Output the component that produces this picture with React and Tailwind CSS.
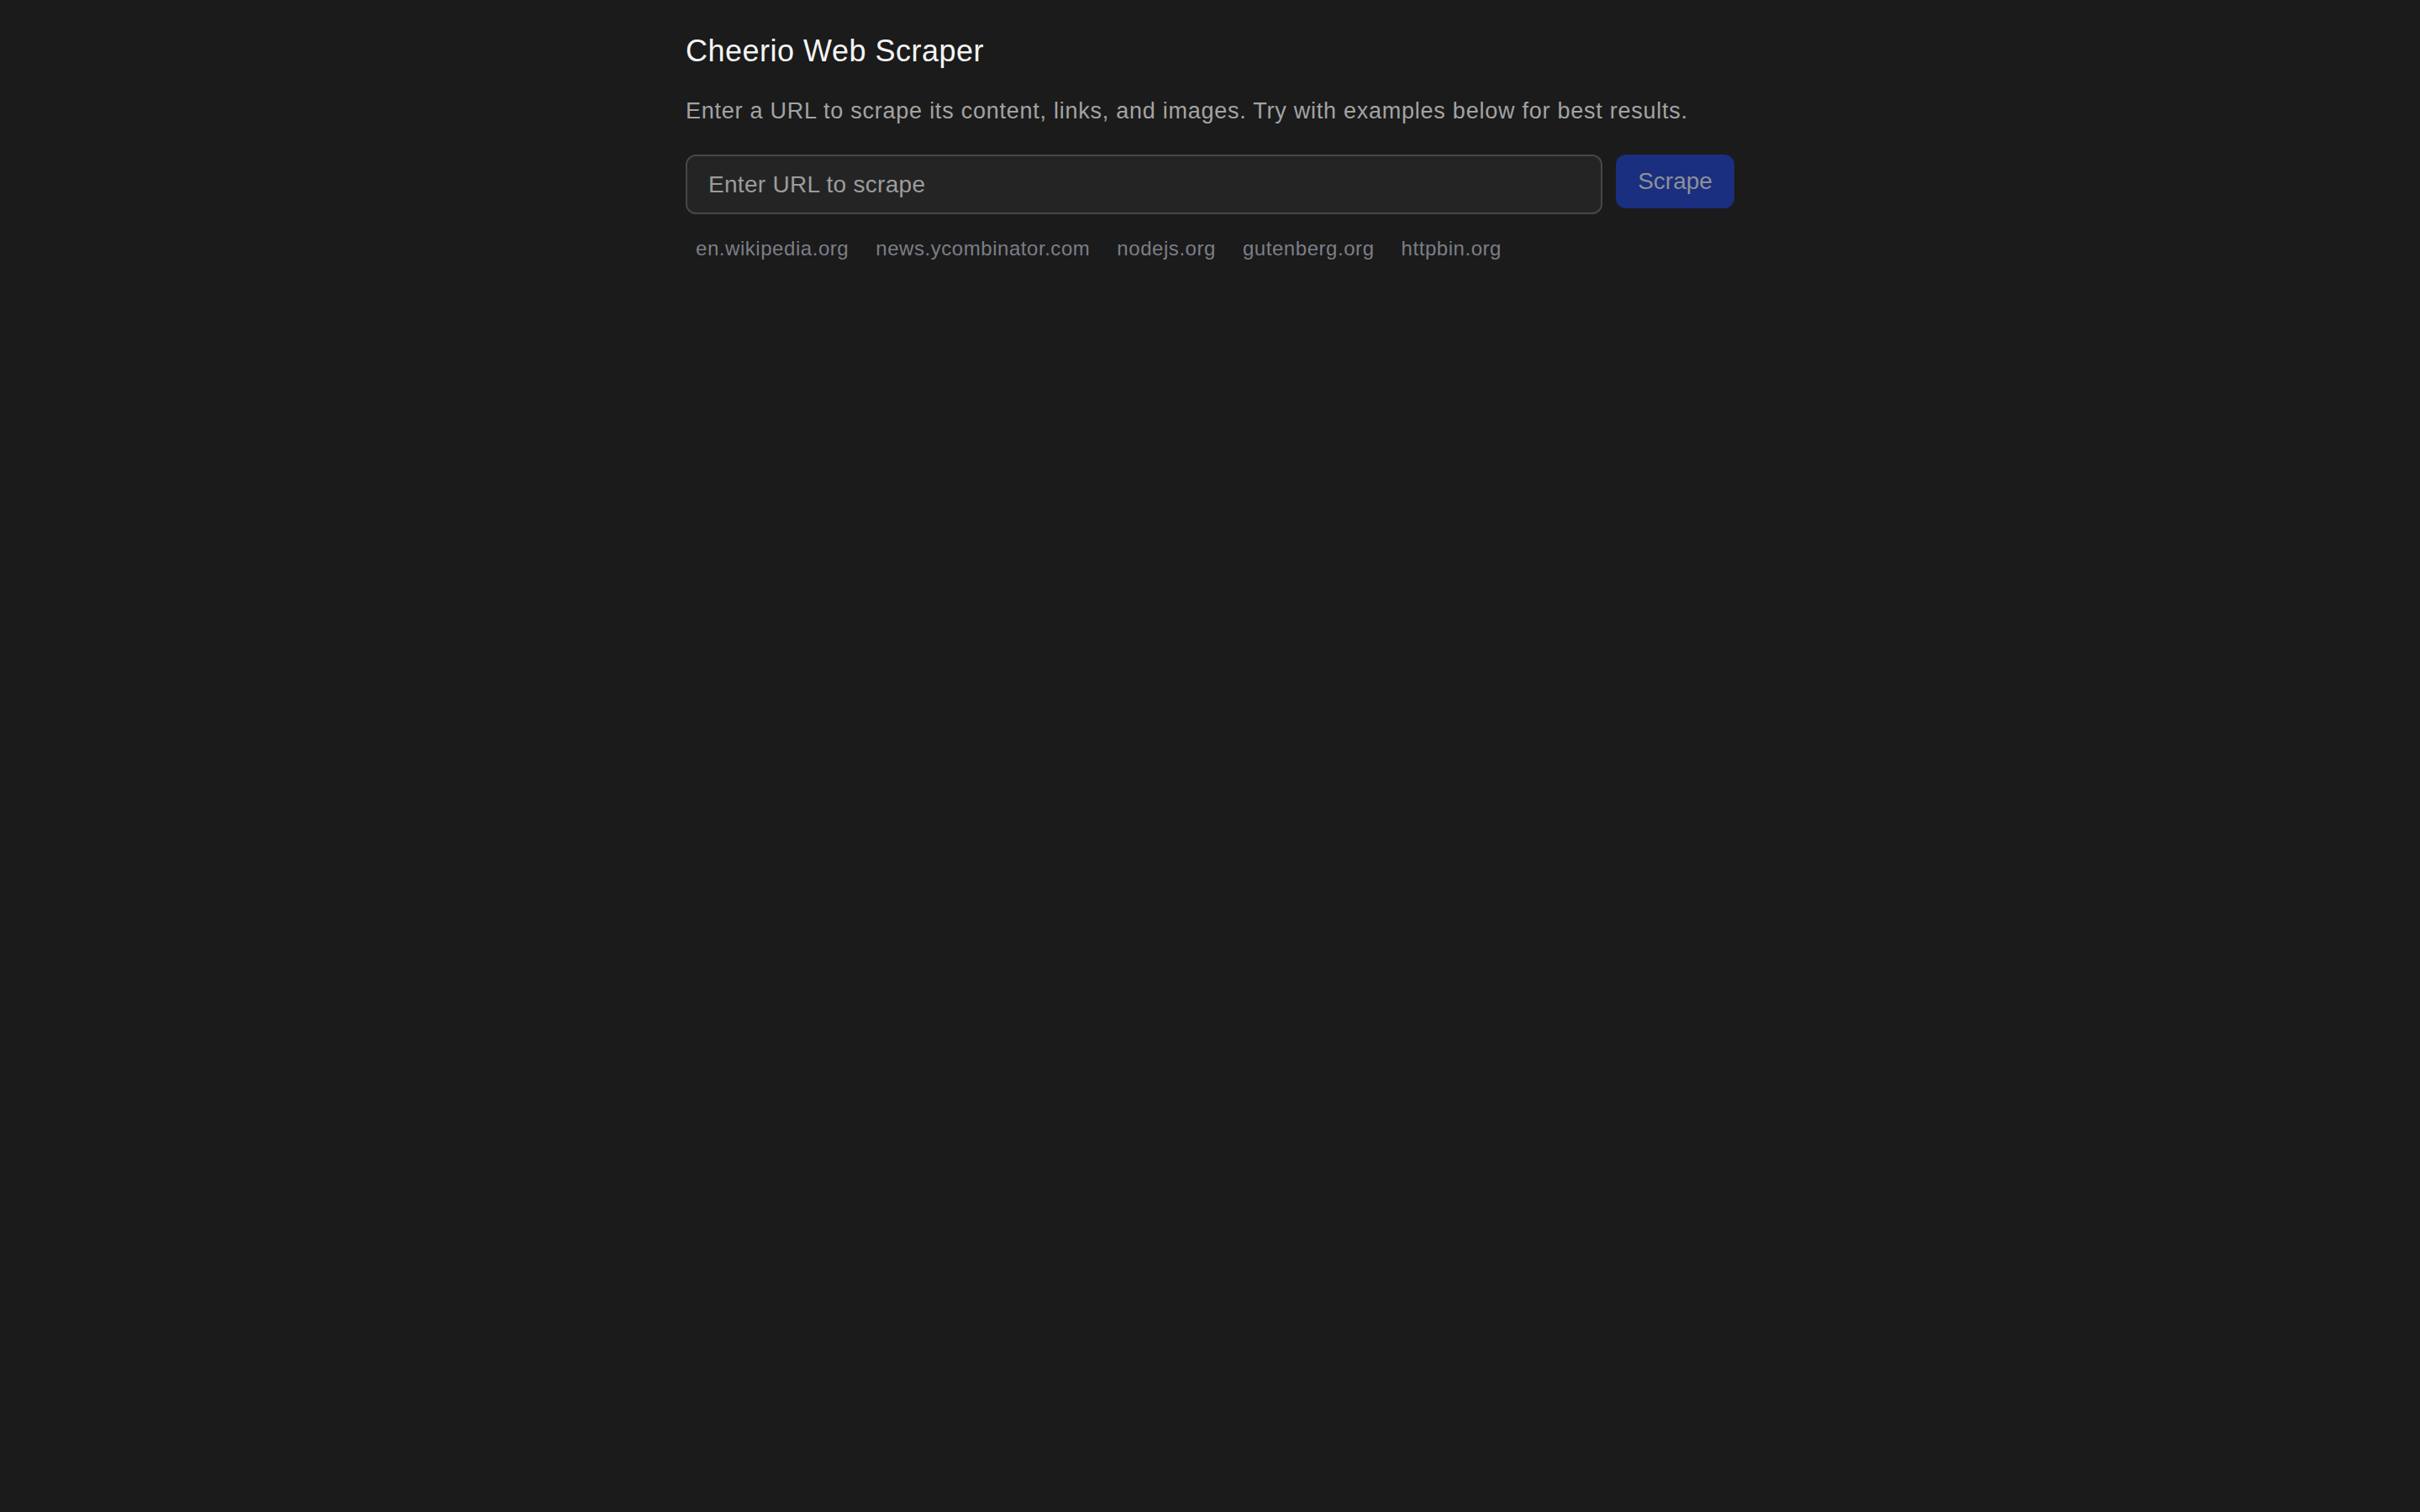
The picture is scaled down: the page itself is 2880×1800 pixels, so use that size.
import { useState } from 'react';

const examples = ['en.wikipedia.org', 'news.ycombinator.com', 'nodejs.org', 'gutenberg.org', 'httpbin.org'];

const App = () => {
    const [url, setUrl] = useState('');

    return (
        <div className="min-h-screen bg-[#1b1b1b] font-['Liberation_Sans',Arial,sans-serif]">
            <div className="max-w-[1280px] mx-auto px-4 pt-[38px]">
                <h1 className="text-[36px] leading-[46px] tracking-[0.5px] text-[#f4f4f4]">Cheerio Web Scraper</h1>
                <p className="mt-[28px] text-[27px] leading-[40px] tracking-[0.75px] text-[#a3a3a3]">
                    Enter a URL to scrape its content, links, and images. Try with examples below for best results.
                </p>

                <div className="mt-[32px] flex items-start gap-4">
                    <input
                        type="text"
                        value={url}
                        onChange={(e) => setUrl(e.target.value)}
                        placeholder="Enter URL to scrape"
                        className="flex-1 h-[71px] px-[25px] rounded-[12px] bg-[#242424] border-2 border-[#474747] text-[28px] tracking-[0.3px] text-[#e5e5e5] placeholder:text-[#9c9c9c] outline-none"
                    />
                    <button
                        disabled={!url}
                        className="w-[141px] h-[64px] rounded-[12px] bg-[#1a2f7f] text-[28px] text-[#8d9098]"
                    >
                        Scrape
                    </button>
                </div>

                <div className="mt-[23px] flex flex-wrap gap-2">
                    {examples.map((ex) => (
                        <button
                            key={ex}
                            onClick={() => setUrl(`https://${ex}`)}
                            className="px-3 leading-[36px] text-[24px] tracking-[0.55px] text-[#7c7e87] rounded-md"
                        >
                            {ex}
                        </button>
                    ))}
                </div>
            </div>
        </div>
    );
};

export default App;
